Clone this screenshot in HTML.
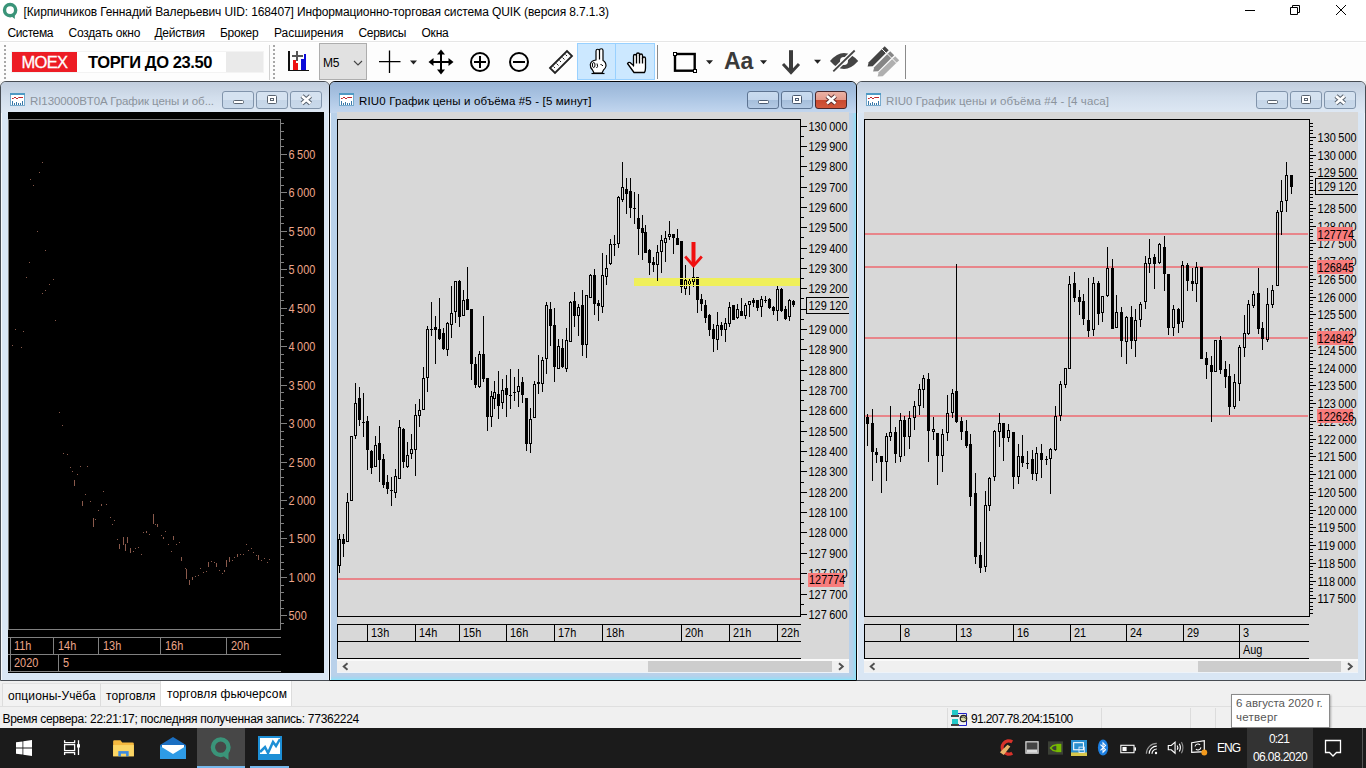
<!DOCTYPE html>
<html lang="ru">
<head>
<meta charset="utf-8">
<title>QUIK</title>
<style>
html,body{margin:0;padding:0}
body{width:1366px;height:768px;overflow:hidden;position:relative;background:#fff;font-family:"Liberation Sans",sans-serif;font-size:12px;color:#000}
.abs{position:absolute}
.t{position:absolute;white-space:nowrap;line-height:1}
#titlebar{left:0;top:0;width:1366px;height:22px;background:#fff}
#menubar{left:0;top:22px;width:1366px;height:20px;background:#fff}
#menubar .t{top:5px;font-size:12.5px}
#toolbar{left:0;top:43px;width:1366px;height:38px;background:#fdfdfd}
#tbline{left:0;top:41px;width:1366px;height:1px;background:#e6e6e6}
#mdi{left:0;top:81px;width:1366px;height:600px;background:#f0f0f0}
.win{position:absolute;top:0;height:600px;border:1px solid #474c53;border-radius:6px 6px 0 0;box-sizing:border-box;background:#d9e6f4;overflow:hidden;box-shadow:inset 1px 1px 0 rgba(255,255,255,.75),inset -1px 0 0 rgba(255,255,255,.5)}
.win.active{border-color:#05070a;z-index:1;background:#b9d1ea;box-shadow:inset 1px 1px 0 rgba(255,255,255,.8),inset -1px -1px 0 #8fe2f8,inset -3px -3px 2px rgba(143,222,248,.55)}
.win .tb{position:absolute;left:0;top:0;right:0;height:31px;background:linear-gradient(#c1cddd 0,#d2deec 50%,#dee8f4 100%)}
.win.active .tb{background:linear-gradient(#98b4d6 0,#a9c3e2 45%,#c3d7ef 100%)}
.win .ttl{position:absolute;top:12px;font-size:12px;line-height:14px;color:#8b939c;white-space:nowrap}
.win.active .ttl{color:#000}
.wb{position:absolute;top:9px;width:32px;height:18px;box-sizing:border-box;border:1px solid #8194ab;border-radius:3px;background:linear-gradient(#d5e2f0 0,#d5e2f0 48%,#c6d6e8 52%,#c9d9ea 100%)}
.active .wb{border-color:#5d7492;background:linear-gradient(#c9dbef 0,#c3d6ec 48%,#a5bedb 52%,#b4cae4 100%)}
.active .wb.close{border-color:#47262b;background:linear-gradient(#eab2a5 0,#e59a8a 48%,#c9492f 52%,#d2583c 100%)}
.wb svg{position:absolute;left:0;top:0}
.chartbg{position:absolute;background:#d8d8d8}
svg.chart{z-index:2}
.sb{z-index:2;position:absolute;height:14px;background:linear-gradient(#fafafa 0,#fafafa 2px,#f0f0f0 2px,#f0f0f0 13px,#eef3f9 13px)}
.sb i{position:absolute;top:2px;height:11px;background:#cdcdcd}
.ax1 text{font-family:"Liberation Sans",sans-serif;font-size:13px;word-spacing:-0.6px}
.ax2 text{font-family:"Liberation Sans",sans-serif;font-size:13px;word-spacing:-0.6px}
#tabs{left:0;top:681px;width:1366px;height:25px;background:#f0f0f0}
#tabs .tab{position:absolute;top:2px;height:23px;box-sizing:border-box;border-left:1px solid #dcdcdc;border-top:1px solid #e2e2e2;background:#f2f2f2;font-size:13px;line-height:24px;white-space:nowrap}
#status{left:0;top:706px;width:1366px;height:22px;background:#f0f0f0;border-top:1px solid #dfdfdf;box-sizing:border-box}
#taskbar{left:0;top:728px;width:1366px;height:40px;background:#1b1b1b}
#taskbar .t{color:#fff}
#apptitle{font-size:12px !important;letter-spacing:-0.120px !important}
#m0{font-size:12px !important;letter-spacing:-0.404px !important}
#m1{font-size:12px !important;letter-spacing:-0.206px !important}
#m2{font-size:12px !important;letter-spacing:-0.285px !important}
#m3{font-size:12px !important;letter-spacing:-0.261px !important}
#m4{font-size:12px !important;letter-spacing:-0.030px !important}
#m5{font-size:12px !important;letter-spacing:-0.317px !important}
#m6{font-size:12px !important;letter-spacing:-0.223px !important}
#moex{font-size:16.5px !important;letter-spacing:-0.723px !important}
#torgi{font-size:16.5px !important;letter-spacing:-0.413px !important}
#ttl1{font-size:11.5px !important;letter-spacing:-0.080px !important}
#ttl2{font-size:11.5px !important;letter-spacing:0.151px !important}
#ttl3{font-size:11.5px !important;letter-spacing:0.093px !important}
#stxt{font-size:12px !important;letter-spacing:-0.281px !important}
#ip{font-size:12px !important;letter-spacing:-0.629px !important}
#tb0{font-size:12px !important;letter-spacing:0.100px !important}
#tb1{font-size:12px !important;letter-spacing:0.074px !important}
#tb2{font-size:12px !important;letter-spacing:0.114px !important}
#tt0{font-size:11.5px !important;letter-spacing:-0.027px !important}
#tt1{font-size:11.5px !important;letter-spacing:0.250px !important}
#eng{font-size:12px !important;letter-spacing:-1.005px !important}
#clk{font-size:12px !important;letter-spacing:-0.840px !important}
#dat{font-size:12px !important;letter-spacing:-0.596px !important}
</style>
</head>
<body>
<!-- ===== application title bar ===== -->
<div id="titlebar" class="abs">
  <svg class="abs" style="left:0;top:0" width="22" height="22" viewBox="0 0 22 22"><circle cx="10.1" cy="10.1" r="5.6" fill="none" stroke="#3a9479" stroke-width="3.4"/><path d="M10.5 15.5L14.8 19L14.8 12Z" fill="#3a9479"/></svg>
  <div class="t" id="apptitle" style="left:23.5px;top:5.5px;font-size:12.5px">[Кирпичников Геннадий Валерьевич UID: 168407] Информационно-торговая система QUIK (версия 8.7.1.3)</div>
  <svg class="abs" style="left:1240px;top:0" width="126" height="22" viewBox="0 0 126 22" fill="none" stroke="#000" stroke-width="1"><path d="M5 10.5H15"/><path d="M50.5 7.5h7v7h-7z"/><path d="M52.5 7.5v-2h7v7h-2"/><path d="M96 5L106 15M106 5L96 15"/></svg>
</div>
<!-- ===== menu ===== -->
<div id="menubar" class="abs">
  <div class="t" id="m0" style="left:7.5px">Система</div>
  <div class="t" id="m1" style="left:68.5px">Создать окно</div>
  <div class="t" id="m2" style="left:154.5px">Действия</div>
  <div class="t" id="m3" style="left:220px">Брокер</div>
  <div class="t" id="m4" style="left:274px">Расширения</div>
  <div class="t" id="m5" style="left:358.5px">Сервисы</div>
  <div class="t" id="m6" style="left:421.5px">Окна</div>
</div>
<div id="tbline" class="abs"></div>
<!-- ===== toolbar ===== -->
<div id="toolbar" class="abs">
  <div class="abs" style="left:4px;top:2px;width:2px;height:34px;background:repeating-linear-gradient(#a8a8a8 0 2px,transparent 2px 4px)"></div>
  <div class="abs" style="left:11px;top:8px;width:253px;height:22px;background:#f3f3f3"></div>
  <div class="abs" style="left:12px;top:9px;width:65px;height:20px;background:#ed1c24"></div>
  <div class="t" id="moex" style="left:21.5px;top:11px;font-size:16.5px;color:#fff;-webkit-text-stroke:0.3px #fff">MOEX</div>
  <div class="abs" style="left:77px;top:9px;width:149px;height:20px;background:#fff"></div>
  <div class="abs" style="left:226px;top:9px;width:37px;height:20px;background:#eaeaea"></div>
  <div class="t" id="torgi" style="left:88px;top:10.5px;font-size:16.5px;font-weight:bold;letter-spacing:-0.3px">ТОРГИ ДО 23.50</div>
  <div class="abs" style="left:269px;top:2px;width:1px;height:35px;background:#d0d0d0"></div>
  <div class="abs" style="left:273px;top:2px;width:2px;height:34px;background:repeating-linear-gradient(#a8a8a8 0 2px,transparent 2px 4px)"></div>
  <!-- toolbar icons: one svg in page coordinates -->
  <div class="abs" style="left:319px;top:0;width:48px;height:37px;background:#e1e1e1;border:1px solid #adadad;box-sizing:border-box"></div>
  <div class="t" id="m5" style="left:323px;top:14px;font-size:11.5px">M5</div>
  <div class="abs" style="left:577px;top:0;width:78px;height:37px;background:#cce8ff;border:1px solid #99d1ff;box-sizing:border-box"></div>
  <div class="abs" style="left:615px;top:0;width:1px;height:37px;background:#99d1ff"></div>
  <div class="abs" style="left:657px;top:2px;width:1px;height:34px;background:#8a8a8a"></div>
  <div class="abs" style="left:905px;top:2px;width:1px;height:34px;background:#8a8a8a"></div>
  <div class="t" id="aa" style="left:724px;top:6.500px;font-size:23px;font-weight:bold;color:#3a3a3a">Aa</div>
  <svg class="abs" style="left:0;top:0" width="1366" height="38" viewBox="0 43 1366 38">
    <!-- add chart -->
    <g shape-rendering="crispEdges"><rect x="288" y="51" width="1.500" height="20" fill="#111"/><rect x="288" y="69.500" width="21" height="1.500" fill="#111"/><rect x="293" y="60" width="2.500" height="9.500" fill="#ee1111"/><rect x="295.500" y="63" width="2.500" height="6.500" fill="#ee1111"/><rect x="301" y="59" width="2.500" height="10.500" fill="#0a0ad8"/><rect x="303.500" y="54" width="2.500" height="15.500" fill="#0a0ad8"/><rect x="296" y="50.500" width="2" height="10.500" fill="#555"/><rect x="291.500" y="55" width="11" height="2" fill="#555"/></g>
    <!-- chevron -->
    <path d="M354 61L358 65L362 61" fill="none" stroke="#444" stroke-width="1.100"/>
    <!-- crosshair -->
    <path d="M389.500 50.500V73M379 61.700H400.500" stroke="#000" stroke-width="1.300" fill="none"/>
    <path d="M410 60.500H417L413.500 64.500Z" fill="#222"/>
    <!-- move -->
    <g stroke="#000" stroke-width="2" fill="none"><path d="M441 52V72M431 62H451"/></g>
    <path d="M441 49.500L445 54.500H437ZM441 74.500L445 69.500H437ZM428.500 62L433.500 58V66ZM453.500 62L448.500 58V66Z" fill="#000"/>
    <!-- zoom in / out -->
    <g stroke="#000" stroke-width="2" fill="none"><circle cx="480" cy="62" r="9"/><path d="M480 56V68M474 62H486"/><circle cx="519" cy="62" r="9"/><path d="M513 62H525"/></g>
    <!-- ruler -->
    <g stroke="#222" fill="none"><path d="M550 68L567 51L572 56L555 73Z" stroke-width="1.800"/><path d="M553.500 66.500L555 68M556.500 63.500L558.500 65.500M559.500 60.500L561 62M562.500 57.500L564.500 59.500M565.500 54.500L567 56" stroke-width="1"/></g>
    <!-- hand: two fingers -->
    <g stroke="#000" stroke-width="1.200" fill="#fff" stroke-linejoin="round"><path d="M596 60V51a1.750 1.750 0 0 1 3.500 0V50.500a1.750 1.750 0 0 1 3.500 0V60.500Q606 62 606 66Q605.500 68.500 603.500 70L602 73H594L592.500 70Q590 67.500 590.300 64.500Q591 60.500 596 60Z"/><path d="M599.500 51V59.500" fill="none"/><ellipse cx="593.700" cy="65" rx="1.300" ry="2.600" fill="none" stroke-width="1"/><path d="M597 63.500Q598.500 67 596.500 68M600.500 64.500Q602 64.500 603 66" fill="none" stroke-width="1"/><path d="M591.500 73.500H604.500" fill="none"/></g>
    <!-- hand: open -->
    <g stroke="#000" stroke-width="1.300" fill="#fff" stroke-linejoin="round"><path d="M633.500 66V56a1.500 1.500 0 0 1 3 0V54.500a1.500 1.500 0 0 1 3 0V55.500a1.500 1.500 0 0 1 3 0V58.500a1.500 1.500 0 0 1 3 0V68Q645.500 71 644.500 72.500H634L627.500 63.500Q628.500 62 630 62.500L633.500 65.500Z"/><path d="M636.500 56V63.500M639.500 55V63.500M642.500 58V63.500" fill="none"/></g>
    <!-- rectangle tool -->
    <rect x="675" y="54" width="19.700" height="16.700" fill="none" stroke="#000" stroke-width="2.400"/><rect x="673.500" y="52.500" width="3" height="3" fill="#fff" stroke="#000" stroke-width="1"/><rect x="693.500" y="69.500" width="3" height="3" fill="#fff" stroke="#000" stroke-width="1"/>
    <path d="M706 60.200H713L709.500 64.200Z" fill="#222"/>
    <path d="M760 60.200H767L763.500 64.200Z" fill="#222"/>
    <!-- down arrow -->
    <g stroke="#3c3c3c" fill="none"><path d="M791 50.200V71" stroke-width="4"/><path d="M783 64L791 72.500L799 64" stroke-width="3"/></g>
    <path d="M814 59.800H821L817.500 63.800Z" fill="#222"/>
    <!-- crossed eye -->
    <path d="M830 61Q837 53 844 53T858.200 61Q851 69 844 69T830 61Z" fill="#444"/><circle cx="844" cy="61" r="4" fill="#fdfdfd"/><path d="M832.500 72.200L855.500 49.700" stroke="#fdfdfd" stroke-width="4.500"/><path d="M833.300 71.400L854.700 50.500" stroke="#444" stroke-width="1.800"/>
    <!-- pencils -->
    <g><path d="M867.600 66.400L868.700 62.200L884.700 46.200L888.700 50.200L872.700 66.200Z" fill="#444"/><path d="M873.100 71.400L874.200 67.200L890.200 51.200L894.200 55.200L878.200 71.200Z" fill="#868686"/><path d="M877.600 76.400L878.700 72.200L895.200 56.200L899.200 60.200L882.700 76.200Z" fill="#b0b0b0"/><path d="M882 49L886 53M887.500 54L891.500 58M892.500 59L896.500 63" stroke="#fdfdfd" stroke-width="1"/></g>
  </svg>
</div>
<!-- ===== MDI area ===== -->
<div id="mdi" class="abs">
  <!-- window 1 -->
  <div class="win" style="left:0;width:330px">
    <div class="tb"></div>
    <svg class="abs" style="left:9px;top:11px" width="15" height="13" viewBox="0 0 15 13" shape-rendering="crispEdges"><rect x="0" y="0" width="15" height="13" fill="#fff"/><rect x="0" y="0" width="15" height="2" fill="#4f9ac4"/><rect x="0" y="2" width="1" height="11" fill="#76aacd"/><rect x="14" y="2" width="1" height="11" fill="#76aacd"/><rect x="0" y="12" width="15" height="1" fill="#76aacd"/><path d="M2 5.500h1.500l1.500-1.500l2 2l1.500-1.500h4.500" fill="none" stroke="#c0282d" stroke-width="1" shape-rendering="auto"/><path d="M2.500 8v4M4.500 10v2M6.500 9v3M8.500 10v2M10.500 10v2M12.500 8v4" stroke="#3a78a8" stroke-width="1"/></svg>
    <div class="ttl" id="ttl1" style="left:29px">RI130000BT0A График цены и об...</div>
    <div class="wb" style="left:221px"><svg width="30" height="16" viewBox="0 0 30 16"><rect x="10.500" y="8.500" width="10" height="3" rx="1" fill="#fff" stroke="#59636f"/></svg></div>
    <div class="wb" style="left:255px"><svg width="30" height="16" viewBox="0 0 30 16"><rect x="10.500" y="3.500" width="9" height="8" rx="1" fill="#fff" stroke="#59636f"/><rect x="13.500" y="6.500" width="3" height="2" fill="#fff" stroke="#59636f"/></svg></div>
    <div class="wb close" style="left:289px"><svg width="30" height="16" viewBox="0 0 30 16"><path d="M11 4L19.500 11.500M19.500 4L11 11.500" stroke="#59636f" stroke-width="4.600"/><path d="M11 4L19.500 11.500M19.500 4L11 11.500" stroke="#fff" stroke-width="2.600"/></svg></div>
    <div class="abs" style="left:7px;top:30px;width:316px;height:561px;background:#000"></div>
  </div>
  <!-- window 2 (active) -->
  <div class="win active" style="left:329px;width:528px">
    <div class="tb"></div>
    <svg class="abs" style="left:9px;top:11px" width="15" height="13" viewBox="0 0 15 13" shape-rendering="crispEdges"><rect x="0" y="0" width="15" height="13" fill="#fff"/><rect x="0" y="0" width="15" height="2" fill="#4f9ac4"/><rect x="0" y="2" width="1" height="11" fill="#76aacd"/><rect x="14" y="2" width="1" height="11" fill="#76aacd"/><rect x="0" y="12" width="15" height="1" fill="#76aacd"/><path d="M2 5.500h1.500l1.500-1.500l2 2l1.500-1.500h4.500" fill="none" stroke="#c0282d" stroke-width="1" shape-rendering="auto"/><path d="M2.500 8v4M4.500 10v2M6.500 9v3M8.500 10v2M10.500 10v2M12.500 8v4" stroke="#3a78a8" stroke-width="1"/></svg>
    <div class="ttl" id="ttl2" style="left:29px">RIU0 График цены и объёма #5 - [5 минут]</div>
    <div class="wb" style="left:417px"><svg width="30" height="16" viewBox="0 0 30 16"><rect x="10.500" y="8.500" width="10" height="3" rx="1" fill="#fff" stroke="#4a5a70"/></svg></div>
    <div class="wb" style="left:451px"><svg width="30" height="16" viewBox="0 0 30 16"><rect x="10.500" y="3.500" width="9" height="8" rx="1" fill="#fff" stroke="#4a5a70"/><rect x="13.500" y="6.500" width="3" height="2" fill="#fff" stroke="#4a5a70"/></svg></div>
    <div class="wb close" style="left:485px"><svg width="30" height="16" viewBox="0 0 30 16"><path d="M11 4L19.500 11.500M19.500 4L11 11.500" stroke="#5a3030" stroke-width="4.400"/><path d="M11 4L19.500 11.500M19.500 4L11 11.500" stroke="#fff" stroke-width="2.600"/></svg></div>
    <div class="chartbg" style="left:7px;top:30px;width:512px;height:561px"></div>
  </div>
  <!-- window 3 -->
  <div class="win" style="left:856px;width:510px">
    <div class="tb"></div>
    <svg class="abs" style="left:9px;top:11px" width="15" height="13" viewBox="0 0 15 13" shape-rendering="crispEdges"><rect x="0" y="0" width="15" height="13" fill="#fff"/><rect x="0" y="0" width="15" height="2" fill="#4f9ac4"/><rect x="0" y="2" width="1" height="11" fill="#76aacd"/><rect x="14" y="2" width="1" height="11" fill="#76aacd"/><rect x="0" y="12" width="15" height="1" fill="#76aacd"/><path d="M2 5.500h1.500l1.500-1.500l2 2l1.500-1.500h4.500" fill="none" stroke="#c0282d" stroke-width="1" shape-rendering="auto"/><path d="M2.500 8v4M4.500 10v2M6.500 9v3M8.500 10v2M10.500 10v2M12.500 8v4" stroke="#3a78a8" stroke-width="1"/></svg>
    <div class="ttl" id="ttl3" style="left:29px">RIU0 График цены и объёма #4 - [4 часа]</div>
    <div class="wb" style="left:399px"><svg width="30" height="16" viewBox="0 0 30 16"><rect x="10.500" y="8.500" width="10" height="3" rx="1" fill="#fff" stroke="#59636f"/></svg></div>
    <div class="wb" style="left:433px"><svg width="30" height="16" viewBox="0 0 30 16"><rect x="10.500" y="3.500" width="9" height="8" rx="1" fill="#fff" stroke="#59636f"/><rect x="13.500" y="6.500" width="3" height="2" fill="#fff" stroke="#59636f"/></svg></div>
    <div class="wb close" style="left:467px"><svg width="30" height="16" viewBox="0 0 30 16"><path d="M11 4L19.500 11.500M19.500 4L11 11.500" stroke="#59636f" stroke-width="4.600"/><path d="M11 4L19.500 11.500M19.500 4L11 11.500" stroke="#fff" stroke-width="2.600"/></svg></div>
    <div class="chartbg" style="left:7px;top:30px;width:494px;height:561px"></div>
  </div>
</div>
<!-- charts (absolute page coordinates) -->
<svg class="abs chart" style="left:8px;top:112px" width="316" height="561" viewBox="0 0 316 561" shape-rendering="crispEdges">
<g fill="#808080">
<rect x="0" y="7" width="273" height="1"/><rect x="0" y="7" width="1" height="511"/><rect x="0" y="517" width="273" height="1"/><rect x="272" y="7" width="1" height="511"/>
<rect x="273" y="11" width="3" height="1"/>
<rect x="273" y="19" width="3" height="1"/>
<rect x="273" y="27" width="3" height="1"/>
<rect x="273" y="34" width="3" height="1"/>
<rect x="273" y="42" width="6" height="1"/>
<rect x="273" y="50" width="3" height="1"/>
<rect x="273" y="57" width="3" height="1"/>
<rect x="273" y="65" width="3" height="1"/>
<rect x="273" y="73" width="3" height="1"/>
<rect x="273" y="80" width="6" height="1"/>
<rect x="273" y="88" width="3" height="1"/>
<rect x="273" y="96" width="3" height="1"/>
<rect x="273" y="104" width="3" height="1"/>
<rect x="273" y="111" width="3" height="1"/>
<rect x="273" y="119" width="6" height="1"/>
<rect x="273" y="127" width="3" height="1"/>
<rect x="273" y="134" width="3" height="1"/>
<rect x="273" y="142" width="3" height="1"/>
<rect x="273" y="150" width="3" height="1"/>
<rect x="273" y="157" width="6" height="1"/>
<rect x="273" y="165" width="3" height="1"/>
<rect x="273" y="173" width="3" height="1"/>
<rect x="273" y="180" width="3" height="1"/>
<rect x="273" y="188" width="3" height="1"/>
<rect x="273" y="196" width="6" height="1"/>
<rect x="273" y="203" width="3" height="1"/>
<rect x="273" y="211" width="3" height="1"/>
<rect x="273" y="219" width="3" height="1"/>
<rect x="273" y="227" width="3" height="1"/>
<rect x="273" y="234" width="6" height="1"/>
<rect x="273" y="242" width="3" height="1"/>
<rect x="273" y="250" width="3" height="1"/>
<rect x="273" y="257" width="3" height="1"/>
<rect x="273" y="265" width="3" height="1"/>
<rect x="273" y="273" width="6" height="1"/>
<rect x="273" y="280" width="3" height="1"/>
<rect x="273" y="288" width="3" height="1"/>
<rect x="273" y="296" width="3" height="1"/>
<rect x="273" y="303" width="3" height="1"/>
<rect x="273" y="311" width="6" height="1"/>
<rect x="273" y="319" width="3" height="1"/>
<rect x="273" y="327" width="3" height="1"/>
<rect x="273" y="334" width="3" height="1"/>
<rect x="273" y="342" width="3" height="1"/>
<rect x="273" y="350" width="6" height="1"/>
<rect x="273" y="357" width="3" height="1"/>
<rect x="273" y="365" width="3" height="1"/>
<rect x="273" y="373" width="3" height="1"/>
<rect x="273" y="380" width="3" height="1"/>
<rect x="273" y="388" width="6" height="1"/>
<rect x="273" y="396" width="3" height="1"/>
<rect x="273" y="403" width="3" height="1"/>
<rect x="273" y="411" width="3" height="1"/>
<rect x="273" y="419" width="3" height="1"/>
<rect x="273" y="426" width="6" height="1"/>
<rect x="273" y="434" width="3" height="1"/>
<rect x="273" y="442" width="3" height="1"/>
<rect x="273" y="450" width="3" height="1"/>
<rect x="273" y="457" width="3" height="1"/>
<rect x="273" y="465" width="6" height="1"/>
<rect x="273" y="473" width="3" height="1"/>
<rect x="273" y="480" width="3" height="1"/>
<rect x="273" y="488" width="3" height="1"/>
<rect x="273" y="496" width="3" height="1"/>
<rect x="273" y="503" width="6" height="1"/>
<rect x="273" y="511" width="3" height="1"/>
<rect x="0" y="525" width="273" height="1"/><rect x="0" y="542" width="273" height="1"/><rect x="0" y="559" width="273" height="1"/>
<rect x="2" y="525" width="1" height="17"/>
<rect x="45" y="525" width="1" height="17"/>
<rect x="90" y="525" width="1" height="17"/>
<rect x="152" y="525" width="1" height="17"/>
<rect x="218" y="525" width="1" height="17"/>
<rect x="2" y="542" width="1" height="17"/>
<rect x="50" y="542" width="1" height="17"/>
</g>
<g fill="#8a5a4c"><rect x="51" y="300" width="1" height="1"/>
<rect x="54" y="313" width="1" height="1"/>
<rect x="55" y="341" width="1" height="1"/>
<rect x="59" y="342" width="1" height="1"/>
<rect x="62" y="355" width="1" height="1"/>
<rect x="64" y="359" width="1" height="1"/>
<rect x="66" y="368" width="1" height="6"/>
<rect x="69" y="362" width="1" height="1"/>
<rect x="72" y="354" width="1" height="1"/>
<rect x="79" y="354" width="1" height="1"/>
<rect x="74" y="389" width="1" height="5"/>
<rect x="77" y="382" width="1" height="1"/>
<rect x="82" y="389" width="1" height="1"/>
<rect x="85" y="406" width="1" height="9"/>
<rect x="87" y="407" width="1" height="1"/>
<rect x="90" y="398" width="1" height="1"/>
<rect x="93" y="392" width="1" height="2"/>
<rect x="95" y="379" width="1" height="1"/>
<rect x="98" y="392" width="1" height="1"/>
<rect x="102" y="405" width="1" height="1"/>
<rect x="104" y="412" width="1" height="1"/>
<rect x="106" y="408" width="1" height="1"/>
<rect x="109" y="427" width="1" height="1"/>
<rect x="111" y="432" width="1" height="5"/>
<rect x="115" y="425" width="1" height="8"/>
<rect x="117" y="432" width="1" height="7"/>
<rect x="119" y="425" width="1" height="6"/>
<rect x="122" y="436" width="1" height="5"/>
<rect x="125" y="439" width="1" height="1"/>
<rect x="127" y="436" width="1" height="1"/>
<rect x="130" y="435" width="1" height="1"/>
<rect x="133" y="442" width="1" height="1"/>
<rect x="135" y="420" width="1" height="1"/>
<rect x="138" y="419" width="1" height="2"/>
<rect x="141" y="422" width="1" height="1"/>
<rect x="145" y="402" width="1" height="10"/>
<rect x="147" y="412" width="1" height="1"/>
<rect x="149" y="412" width="1" height="3"/>
<rect x="153" y="423" width="1" height="1"/>
<rect x="155" y="425" width="1" height="2"/>
<rect x="157" y="419" width="1" height="1"/>
<rect x="160" y="432" width="1" height="1"/>
<rect x="163" y="439" width="1" height="1"/>
<rect x="165" y="424" width="1" height="4"/>
<rect x="168" y="432" width="1" height="1"/>
<rect x="171" y="430" width="1" height="1"/>
<rect x="173" y="445" width="1" height="4"/>
<rect x="177" y="456" width="1" height="1"/>
<rect x="178" y="457" width="1" height="10"/>
<rect x="181" y="468" width="1" height="5"/>
<rect x="184" y="465" width="1" height="3"/>
<rect x="187" y="464" width="1" height="1"/>
<rect x="190" y="463" width="1" height="1"/>
<rect x="192" y="456" width="1" height="1"/>
<rect x="195" y="460" width="1" height="1"/>
<rect x="198" y="459" width="1" height="1"/>
<rect x="200" y="450" width="1" height="5"/>
<rect x="203" y="449" width="1" height="1"/>
<rect x="206" y="450" width="1" height="1"/>
<rect x="208" y="451" width="1" height="4"/>
<rect x="211" y="458" width="1" height="1"/>
<rect x="214" y="461" width="1" height="1"/>
<rect x="216" y="458" width="1" height="2"/>
<rect x="218" y="448" width="1" height="7"/>
<rect x="221" y="445" width="1" height="5"/>
<rect x="224" y="448" width="1" height="1"/>
<rect x="226" y="445" width="1" height="1"/>
<rect x="229" y="442" width="1" height="3"/>
<rect x="232" y="442" width="1" height="1"/>
<rect x="235" y="442" width="1" height="1"/>
<rect x="238" y="432" width="1" height="1"/>
<rect x="240" y="438" width="1" height="1"/>
<rect x="243" y="436" width="1" height="1"/>
<rect x="245" y="440" width="1" height="1"/>
<rect x="248" y="443" width="1" height="1"/>
<rect x="250" y="443" width="1" height="5"/>
<rect x="253" y="448" width="1" height="1"/>
<rect x="256" y="446" width="1" height="1"/>
<rect x="259" y="450" width="1" height="1"/>
<rect x="261" y="447" width="1" height="1"/>
<rect x="34" y="50" width="1" height="1"/>
<rect x="31" y="60" width="1" height="1"/>
<rect x="22" y="67" width="1" height="1"/>
<rect x="25" y="73" width="1" height="1"/>
<rect x="29" y="119" width="1" height="1"/>
<rect x="37" y="138" width="1" height="1"/>
<rect x="21" y="150" width="1" height="1"/>
<rect x="18" y="165" width="1" height="1"/>
<rect x="45" y="167" width="1" height="1"/>
<rect x="41" y="172" width="1" height="1"/>
<rect x="37" y="178" width="1" height="1"/>
<rect x="34" y="181" width="1" height="1"/>
<rect x="47" y="208" width="1" height="1"/>
<rect x="7" y="217" width="1" height="1"/>
<rect x="15" y="219" width="1" height="1"/>
<rect x="4" y="233" width="1" height="1"/>
<rect x="13" y="235" width="1" height="1"/></g>
<g class="ax1" fill="#eea68a">
<text transform="translate(280.5 47.2) scale(0.84 1)">6 500</text>
<text transform="translate(280.5 85.2) scale(0.84 1)">6 000</text>
<text transform="translate(280.5 124.2) scale(0.84 1)">5 500</text>
<text transform="translate(280.5 162.1) scale(0.84 1)">5 000</text>
<text transform="translate(280.5 201.1) scale(0.84 1)">4 500</text>
<text transform="translate(280.5 239.1) scale(0.84 1)">4 000</text>
<text transform="translate(280.5 278.1) scale(0.84 1)">3 500</text>
<text transform="translate(280.5 316.1) scale(0.84 1)">3 000</text>
<text transform="translate(280.5 355.1) scale(0.84 1)">2 500</text>
<text transform="translate(280.5 393.1) scale(0.84 1)">2 000</text>
<text transform="translate(280.5 431.1) scale(0.84 1)">1 500</text>
<text transform="translate(280.5 470.1) scale(0.84 1)">1 000</text>
<text transform="translate(280.5 508.1) scale(0.84 1)">500</text>
<text transform="translate(6 537.8) scale(0.84 1)">11h</text>
<text transform="translate(50 537.8) scale(0.84 1)">14h</text>
<text transform="translate(95 537.8) scale(0.84 1)">13h</text>
<text transform="translate(157 537.8) scale(0.84 1)">16h</text>
<text transform="translate(223 537.8) scale(0.84 1)">20h</text>
<text transform="translate(6 554.8) scale(0.84 1)">2020</text>
<text transform="translate(55 554.8) scale(0.84 1)">5</text>
</g></svg>
<svg class="abs chart" style="left:337px;top:112px" width="512" height="561" viewBox="0 0 512 561" shape-rendering="crispEdges">
<g fill="#000">
<rect x="0" y="7" width="464" height="1"/><rect x="0" y="7" width="1" height="498"/><rect x="0" y="504" width="464" height="1"/><rect x="463" y="7" width="1" height="498"/>
<rect x="297" y="166" width="166" height="8" fill="#efef5a"/>
<rect x="1" y="466" width="462" height="2" fill="#e8858a"/>
<rect x="2" y="422" width="1" height="5"/>
<rect x="2" y="454" width="1" height="7"/>
<path d="M1 427h3v27h-3zM2 428v25h1v-25z" fill-rule="evenodd"/>
<rect x="6" y="422" width="1" height="23"/>
<rect x="5" y="427" width="3" height="5"/>
<rect x="10" y="381" width="1" height="9"/>
<path d="M9 390h3v40h-3zM10 391v38h1v-38z" fill-rule="evenodd"/>
<path d="M13 324h3v65h-3zM14 325v63h1v-63z" fill-rule="evenodd"/>
<rect x="18" y="271" width="1" height="20"/>
<rect x="18" y="324" width="1" height="3"/>
<path d="M17 291h3v33h-3zM18 292v31h1v-31z" fill-rule="evenodd"/>
<rect x="22" y="275" width="1" height="39"/>
<rect x="21" y="286" width="3" height="22"/>
<rect x="26" y="281" width="1" height="44"/>
<rect x="25" y="310" width="3" height="1"/>
<rect x="30" y="304" width="1" height="54"/>
<rect x="29" y="309" width="3" height="29"/>
<rect x="34" y="338" width="1" height="24"/>
<rect x="33" y="339" width="3" height="17"/>
<rect x="38" y="324" width="1" height="9"/>
<path d="M37 333h3v22h-3zM38 334v20h1v-20z" fill-rule="evenodd"/>
<rect x="42" y="314" width="1" height="56"/>
<rect x="41" y="331" width="3" height="17"/>
<rect x="46" y="342" width="1" height="34"/>
<rect x="45" y="347" width="3" height="26"/>
<rect x="50" y="363" width="1" height="19"/>
<rect x="49" y="370" width="3" height="7"/>
<rect x="54" y="365" width="1" height="29"/>
<rect x="53" y="378" width="3" height="1"/>
<rect x="58" y="357" width="1" height="7"/>
<rect x="58" y="381" width="1" height="5"/>
<path d="M57 364h3v17h-3zM58 365v15h1v-15z" fill-rule="evenodd"/>
<rect x="62" y="308" width="1" height="7"/>
<path d="M61 315h3v52h-3zM62 316v50h1v-50z" fill-rule="evenodd"/>
<rect x="66" y="316" width="1" height="40"/>
<rect x="65" y="317" width="3" height="33"/>
<rect x="70" y="330" width="1" height="13"/>
<rect x="70" y="355" width="1" height="1"/>
<path d="M69 343h3v12h-3zM70 344v10h1v-10z" fill-rule="evenodd"/>
<rect x="74" y="322" width="1" height="15"/>
<rect x="74" y="342" width="1" height="5"/>
<path d="M73 337h3v5h-3zM74 338v3h1v-3z" fill-rule="evenodd"/>
<rect x="78" y="292" width="1" height="11"/>
<rect x="78" y="338" width="1" height="26"/>
<path d="M77 303h3v35h-3zM78 304v33h1v-33z" fill-rule="evenodd"/>
<rect x="82" y="287" width="1" height="11"/>
<rect x="82" y="304" width="1" height="11"/>
<path d="M81 298h3v6h-3zM82 299v4h1v-4z" fill-rule="evenodd"/>
<rect x="86" y="255" width="1" height="11"/>
<path d="M85 266h3v32h-3zM86 267v30h1v-30z" fill-rule="evenodd"/>
<rect x="90" y="214" width="1" height="3"/>
<rect x="90" y="266" width="1" height="14"/>
<path d="M89 217h3v49h-3zM90 218v47h1v-47z" fill-rule="evenodd"/>
<rect x="94" y="190" width="1" height="34"/>
<rect x="93" y="217" width="3" height="1"/>
<rect x="98" y="204" width="1" height="48"/>
<rect x="97" y="215" width="3" height="3"/>
<rect x="102" y="186" width="1" height="42"/>
<rect x="101" y="217" width="3" height="10"/>
<rect x="106" y="216" width="1" height="22"/>
<rect x="105" y="221" width="3" height="16"/>
<rect x="110" y="210" width="1" height="1"/>
<rect x="110" y="238" width="1" height="6"/>
<path d="M109 211h3v27h-3zM110 212v25h1v-25z" fill-rule="evenodd"/>
<rect x="114" y="174" width="1" height="27"/>
<rect x="114" y="213" width="1" height="13"/>
<path d="M113 201h3v12h-3zM114 202v10h1v-10z" fill-rule="evenodd"/>
<rect x="118" y="200" width="1" height="11"/>
<path d="M117 169h3v31h-3zM118 170v29h1v-29z" fill-rule="evenodd"/>
<rect x="122" y="168" width="1" height="47"/>
<rect x="121" y="169" width="3" height="36"/>
<rect x="126" y="178" width="1" height="10"/>
<path d="M125 188h3v16h-3zM126 189v14h1v-14z" fill-rule="evenodd"/>
<rect x="130" y="155" width="1" height="43"/>
<rect x="129" y="187" width="3" height="11"/>
<rect x="134" y="197" width="1" height="71"/>
<rect x="133" y="197" width="3" height="55"/>
<rect x="138" y="245" width="1" height="31"/>
<rect x="137" y="252" width="3" height="21"/>
<rect x="142" y="239" width="1" height="3"/>
<rect x="142" y="275" width="1" height="1"/>
<path d="M141 242h3v33h-3zM142 243v31h1v-31z" fill-rule="evenodd"/>
<rect x="146" y="204" width="1" height="66"/>
<rect x="145" y="242" width="3" height="25"/>
<rect x="150" y="266" width="1" height="53"/>
<rect x="149" y="266" width="3" height="39"/>
<rect x="154" y="279" width="1" height="5"/>
<rect x="154" y="305" width="1" height="10"/>
<path d="M153 284h3v21h-3zM154 285v19h1v-19z" fill-rule="evenodd"/>
<rect x="157" y="269" width="1" height="11"/>
<rect x="157" y="287" width="1" height="10"/>
<path d="M156 280h3v7h-3zM157 281v5h1v-5z" fill-rule="evenodd"/>
<rect x="161" y="259" width="1" height="48"/>
<rect x="160" y="282" width="3" height="12"/>
<rect x="165" y="267" width="1" height="11"/>
<rect x="165" y="291" width="1" height="6"/>
<path d="M164 278h3v13h-3zM165 279v11h1v-11z" fill-rule="evenodd"/>
<rect x="169" y="263" width="1" height="42"/>
<rect x="168" y="276" width="3" height="7"/>
<rect x="173" y="257" width="1" height="40"/>
<rect x="172" y="283" width="3" height="1"/>
<rect x="177" y="265" width="1" height="24"/>
<rect x="176" y="280" width="3" height="1"/>
<rect x="181" y="257" width="1" height="17"/>
<rect x="181" y="280" width="1" height="15"/>
<path d="M180 274h3v6h-3zM181 275v4h1v-4z" fill-rule="evenodd"/>
<rect x="185" y="265" width="1" height="26"/>
<rect x="184" y="270" width="3" height="13"/>
<rect x="189" y="286" width="1" height="53"/>
<rect x="188" y="286" width="3" height="46"/>
<rect x="193" y="296" width="1" height="11"/>
<rect x="193" y="332" width="1" height="9"/>
<path d="M192 307h3v25h-3zM193 308v23h1v-23z" fill-rule="evenodd"/>
<rect x="197" y="269" width="1" height="3"/>
<path d="M196 272h3v34h-3zM197 273v32h1v-32z" fill-rule="evenodd"/>
<rect x="201" y="243" width="1" height="39"/>
<rect x="200" y="270" width="3" height="2"/>
<rect x="205" y="245" width="1" height="3"/>
<rect x="205" y="272" width="1" height="8"/>
<path d="M204 248h3v24h-3zM205 249v22h1v-22z" fill-rule="evenodd"/>
<rect x="209" y="190" width="1" height="3"/>
<rect x="209" y="247" width="1" height="15"/>
<path d="M208 193h3v54h-3zM209 194v52h1v-52z" fill-rule="evenodd"/>
<rect x="213" y="190" width="1" height="44"/>
<rect x="212" y="197" width="3" height="17"/>
<rect x="217" y="196" width="1" height="74"/>
<rect x="216" y="213" width="3" height="42"/>
<rect x="221" y="227" width="1" height="7"/>
<path d="M220 234h3v23h-3zM221 235v21h1v-21z" fill-rule="evenodd"/>
<rect x="225" y="227" width="1" height="29"/>
<rect x="224" y="236" width="3" height="19"/>
<rect x="229" y="216" width="1" height="12"/>
<rect x="229" y="257" width="1" height="3"/>
<path d="M228 228h3v29h-3zM229 229v27h1v-27z" fill-rule="evenodd"/>
<rect x="233" y="189" width="1" height="1"/>
<path d="M232 190h3v40h-3zM233 191v38h1v-38z" fill-rule="evenodd"/>
<rect x="237" y="180" width="1" height="35"/>
<rect x="236" y="189" width="3" height="15"/>
<rect x="241" y="192" width="1" height="3"/>
<rect x="241" y="204" width="1" height="20"/>
<path d="M240 195h3v9h-3zM241 196v7h1v-7z" fill-rule="evenodd"/>
<rect x="245" y="178" width="1" height="66"/>
<rect x="244" y="193" width="3" height="40"/>
<rect x="249" y="233" width="1" height="13"/>
<path d="M248 183h3v50h-3zM249 184v48h1v-48z" fill-rule="evenodd"/>
<rect x="253" y="162" width="1" height="1"/>
<path d="M252 163h3v23h-3zM253 164v21h1v-21z" fill-rule="evenodd"/>
<rect x="257" y="157" width="1" height="46"/>
<rect x="256" y="163" width="3" height="29"/>
<rect x="261" y="188" width="1" height="21"/>
<rect x="260" y="191" width="3" height="3"/>
<rect x="265" y="141" width="1" height="22"/>
<rect x="265" y="195" width="1" height="6"/>
<path d="M264 163h3v32h-3zM265 164v30h1v-30z" fill-rule="evenodd"/>
<rect x="269" y="143" width="1" height="13"/>
<rect x="269" y="165" width="1" height="8"/>
<path d="M268 156h3v9h-3zM269 157v7h1v-7z" fill-rule="evenodd"/>
<rect x="273" y="127" width="1" height="5"/>
<rect x="273" y="152" width="1" height="1"/>
<path d="M272 132h3v20h-3zM273 133v18h1v-18z" fill-rule="evenodd"/>
<rect x="277" y="123" width="1" height="21"/>
<rect x="276" y="132" width="3" height="1"/>
<rect x="281" y="84" width="1" height="1"/>
<rect x="281" y="132" width="1" height="4"/>
<path d="M280 85h3v47h-3zM281 86v45h1v-45z" fill-rule="evenodd"/>
<rect x="285" y="50" width="1" height="25"/>
<rect x="285" y="88" width="1" height="2"/>
<path d="M284 75h3v13h-3zM285 76v11h1v-11z" fill-rule="evenodd"/>
<rect x="289" y="66" width="1" height="36"/>
<rect x="288" y="77" width="3" height="5"/>
<rect x="293" y="66" width="1" height="40"/>
<rect x="292" y="79" width="3" height="17"/>
<rect x="297" y="80" width="1" height="32"/>
<rect x="296" y="96" width="3" height="1"/>
<rect x="301" y="82" width="1" height="61"/>
<rect x="300" y="106" width="3" height="11"/>
<rect x="305" y="103" width="1" height="45"/>
<rect x="304" y="116" width="3" height="5"/>
<rect x="308" y="113" width="1" height="28"/>
<rect x="307" y="120" width="3" height="21"/>
<rect x="312" y="137" width="1" height="26"/>
<rect x="311" y="138" width="3" height="13"/>
<rect x="316" y="145" width="1" height="15"/>
<rect x="315" y="150" width="3" height="3"/>
<rect x="320" y="133" width="1" height="7"/>
<rect x="320" y="153" width="1" height="16"/>
<path d="M319 140h3v13h-3zM320 141v11h1v-11z" fill-rule="evenodd"/>
<rect x="324" y="123" width="1" height="5"/>
<rect x="324" y="140" width="1" height="21"/>
<path d="M323 128h3v12h-3zM324 129v10h1v-10z" fill-rule="evenodd"/>
<rect x="328" y="119" width="1" height="7"/>
<rect x="328" y="131" width="1" height="19"/>
<path d="M327 126h3v5h-3zM328 127v3h1v-3z" fill-rule="evenodd"/>
<rect x="332" y="109" width="1" height="13"/>
<rect x="332" y="125" width="1" height="3"/>
<path d="M331 122h3v3h-3zM332 123v1h1v-1z" fill-rule="evenodd"/>
<rect x="336" y="122" width="1" height="20"/>
<rect x="335" y="122" width="3" height="4"/>
<rect x="340" y="117" width="1" height="16"/>
<rect x="339" y="126" width="3" height="7"/>
<rect x="364" y="182" width="1" height="17"/>
<rect x="363" y="187" width="3" height="5"/>
<rect x="368" y="188" width="1" height="23"/>
<rect x="367" y="193" width="3" height="13"/>
<rect x="372" y="202" width="1" height="22"/>
<rect x="371" y="203" width="3" height="15"/>
<rect x="376" y="212" width="1" height="28"/>
<rect x="375" y="217" width="3" height="10"/>
<rect x="380" y="200" width="1" height="13"/>
<rect x="380" y="228" width="1" height="10"/>
<path d="M379 213h3v15h-3zM380 214v13h1v-13z" fill-rule="evenodd"/>
<rect x="384" y="210" width="1" height="14"/>
<rect x="383" y="213" width="3" height="5"/>
<rect x="388" y="206" width="1" height="5"/>
<rect x="388" y="218" width="1" height="12"/>
<path d="M387 211h3v7h-3zM388 212v5h1v-5z" fill-rule="evenodd"/>
<rect x="392" y="190" width="1" height="5"/>
<rect x="392" y="212" width="1" height="3"/>
<path d="M391 195h3v17h-3zM392 196v15h1v-15z" fill-rule="evenodd"/>
<rect x="396" y="193" width="1" height="15"/>
<rect x="395" y="193" width="3" height="15"/>
<rect x="400" y="192" width="1" height="5"/>
<rect x="400" y="206" width="1" height="1"/>
<path d="M399 197h3v9h-3zM400 198v7h1v-7z" fill-rule="evenodd"/>
<rect x="404" y="186" width="1" height="18"/>
<rect x="403" y="199" width="3" height="5"/>
<rect x="408" y="191" width="1" height="2"/>
<rect x="408" y="204" width="1" height="3"/>
<path d="M407 193h3v11h-3zM408 194v9h1v-9z" fill-rule="evenodd"/>
<rect x="412" y="193" width="1" height="12"/>
<path d="M411 189h3v4h-3zM412 190v2h1v-2z" fill-rule="evenodd"/>
<rect x="416" y="186" width="1" height="9"/>
<rect x="415" y="188" width="3" height="3"/>
<rect x="420" y="188" width="1" height="11"/>
<rect x="419" y="188" width="3" height="8"/>
<rect x="424" y="184" width="1" height="3"/>
<rect x="424" y="195" width="1" height="10"/>
<path d="M423 187h3v8h-3zM424 188v6h1v-6z" fill-rule="evenodd"/>
<rect x="428" y="184" width="1" height="7"/>
<rect x="427" y="188" width="3" height="1"/>
<rect x="432" y="186" width="1" height="11"/>
<rect x="431" y="187" width="3" height="9"/>
<rect x="436" y="194" width="1" height="9"/>
<rect x="435" y="195" width="3" height="4"/>
<rect x="440" y="174" width="1" height="3"/>
<rect x="440" y="199" width="1" height="10"/>
<path d="M439 177h3v22h-3zM440 178v20h1v-20z" fill-rule="evenodd"/>
<rect x="444" y="176" width="1" height="24"/>
<rect x="443" y="177" width="3" height="22"/>
<rect x="448" y="194" width="1" height="14"/>
<rect x="447" y="197" width="3" height="10"/>
<rect x="452" y="187" width="1" height="1"/>
<rect x="452" y="205" width="1" height="4"/>
<path d="M451 188h3v17h-3zM452 189v15h1v-15z" fill-rule="evenodd"/>
<rect x="456" y="188" width="1" height="7"/>
<rect x="455" y="189" width="3" height="4"/>
<rect x="343" y="129" width="3" height="37"/>
<rect x="343" y="167" width="3" height="6"/>
<rect x="343" y="174" width="3" height="1"/>
<rect x="344" y="175" width="1" height="6"/>
<rect x="348" y="153" width="1" height="13"/>
<rect x="348" y="167" width="1" height="2"/>
<rect x="347" y="168" width="1" height="5"/>
<rect x="349" y="168" width="1" height="5"/>
<rect x="347" y="174" width="1" height="3"/>
<rect x="349" y="174" width="1" height="3"/>
<rect x="348" y="176" width="1" height="7"/>
<rect x="352" y="167" width="1" height="2"/>
<rect x="351" y="169" width="1" height="3"/>
<rect x="353" y="169" width="1" height="3"/>
<rect x="352" y="172" width="1" height="1"/>
<rect x="352" y="174" width="1" height="9"/>
<rect x="356" y="155" width="1" height="10"/>
<rect x="355" y="165" width="3" height="1"/>
<rect x="355" y="167" width="1" height="3"/>
<rect x="357" y="167" width="1" height="3"/>
<rect x="356" y="169" width="1" height="4"/>
<rect x="356" y="174" width="1" height="1"/>
<rect x="359" y="165" width="3" height="1"/>
<rect x="359" y="167" width="3" height="6"/>
<rect x="359" y="174" width="3" height="14"/>
<rect x="360" y="188" width="1" height="13"/>
<g fill="none" stroke="#f01010" shape-rendering="auto"><path d="M356.500 130V153" stroke-width="4"/><path d="M348.200 144.500L356.500 154L364.800 144.500" stroke-width="2.700"/></g>
<rect x="464" y="14" width="6" height="1"/>
<rect x="464" y="24" width="3" height="1"/>
<rect x="464" y="34" width="6" height="1"/>
<rect x="464" y="44" width="3" height="1"/>
<rect x="464" y="54" width="6" height="1"/>
<rect x="464" y="64" width="3" height="1"/>
<rect x="464" y="75" width="6" height="1"/>
<rect x="464" y="85" width="3" height="1"/>
<rect x="464" y="95" width="6" height="1"/>
<rect x="464" y="105" width="3" height="1"/>
<rect x="464" y="115" width="6" height="1"/>
<rect x="464" y="125" width="3" height="1"/>
<rect x="464" y="136" width="6" height="1"/>
<rect x="464" y="146" width="3" height="1"/>
<rect x="464" y="156" width="6" height="1"/>
<rect x="464" y="166" width="3" height="1"/>
<rect x="464" y="176" width="6" height="1"/>
<rect x="464" y="186" width="3" height="1"/>
<rect x="464" y="197" width="6" height="1"/>
<rect x="464" y="207" width="3" height="1"/>
<rect x="464" y="217" width="6" height="1"/>
<rect x="464" y="227" width="3" height="1"/>
<rect x="464" y="237" width="6" height="1"/>
<rect x="464" y="248" width="3" height="1"/>
<rect x="464" y="258" width="6" height="1"/>
<rect x="464" y="268" width="3" height="1"/>
<rect x="464" y="278" width="6" height="1"/>
<rect x="464" y="288" width="3" height="1"/>
<rect x="464" y="298" width="6" height="1"/>
<rect x="464" y="309" width="3" height="1"/>
<rect x="464" y="319" width="6" height="1"/>
<rect x="464" y="329" width="3" height="1"/>
<rect x="464" y="339" width="6" height="1"/>
<rect x="464" y="349" width="3" height="1"/>
<rect x="464" y="359" width="6" height="1"/>
<rect x="464" y="370" width="3" height="1"/>
<rect x="464" y="380" width="6" height="1"/>
<rect x="464" y="390" width="3" height="1"/>
<rect x="464" y="400" width="6" height="1"/>
<rect x="464" y="410" width="3" height="1"/>
<rect x="464" y="420" width="6" height="1"/>
<rect x="464" y="431" width="3" height="1"/>
<rect x="464" y="441" width="6" height="1"/>
<rect x="464" y="451" width="3" height="1"/>
<rect x="464" y="461" width="6" height="1"/>
<rect x="464" y="471" width="3" height="1"/>
<rect x="464" y="482" width="6" height="1"/>
<rect x="464" y="492" width="3" height="1"/>
<rect x="464" y="502" width="6" height="1"/>
<rect x="0" y="512" width="464" height="1"/><rect x="0" y="529" width="464" height="1"/><rect x="0" y="546" width="464" height="1"/><rect x="0" y="512" width="1" height="35"/>
<rect x="30" y="512" width="1" height="17"/>
<rect x="78" y="512" width="1" height="17"/>
<rect x="122" y="512" width="1" height="17"/>
<rect x="169" y="512" width="1" height="17"/>
<rect x="217" y="512" width="1" height="17"/>
<rect x="265" y="512" width="1" height="17"/>
<rect x="344" y="512" width="1" height="17"/>
<rect x="392" y="512" width="1" height="17"/>
<rect x="440" y="512" width="1" height="17"/>
</g>
<g class="ax2" fill="#000">
<text transform="translate(471.5 19.2) scale(0.84 1)">130 000</text>
<text transform="translate(471.5 39.2) scale(0.84 1)">129 900</text>
<text transform="translate(471.5 59.2) scale(0.84 1)">129 800</text>
<text transform="translate(471.5 80.2) scale(0.84 1)">129 700</text>
<text transform="translate(471.5 100.2) scale(0.84 1)">129 600</text>
<text transform="translate(471.5 120.2) scale(0.84 1)">129 500</text>
<text transform="translate(471.5 141.2) scale(0.84 1)">129 400</text>
<text transform="translate(471.5 161.1) scale(0.84 1)">129 300</text>
<text transform="translate(471.5 181.1) scale(0.84 1)">129 200</text>
<text transform="translate(471.5 222.1) scale(0.84 1)">129 000</text>
<text transform="translate(471.5 242.1) scale(0.84 1)">128 900</text>
<text transform="translate(471.5 263.1) scale(0.84 1)">128 800</text>
<text transform="translate(471.5 283.1) scale(0.84 1)">128 700</text>
<text transform="translate(471.5 303.1) scale(0.84 1)">128 600</text>
<text transform="translate(471.5 324.1) scale(0.84 1)">128 500</text>
<text transform="translate(471.5 344.1) scale(0.84 1)">128 400</text>
<text transform="translate(471.5 364.1) scale(0.84 1)">128 300</text>
<text transform="translate(471.5 385.1) scale(0.84 1)">128 200</text>
<text transform="translate(471.5 405.1) scale(0.84 1)">128 100</text>
<text transform="translate(471.5 425.1) scale(0.84 1)">128 000</text>
<text transform="translate(471.5 446.1) scale(0.84 1)">127 900</text>
<text transform="translate(471.5 466.1) scale(0.84 1)">127 800</text>
<text transform="translate(471.5 487.1) scale(0.84 1)">127 700</text>
<text transform="translate(471.5 507.1) scale(0.84 1)">127 600</text>
<rect x="469" y="185" width="44" height="16" fill="#d8d8d8" stroke="#000" stroke-width="1" transform="translate(.5,.5)"/><text transform="translate(471.5 198) scale(0.84 1)">129 120</text>
<rect x="471" y="461" width="36" height="14" fill="#f87c7c"/><text transform="translate(472 472.2) scale(0.84 1)">127774</text>
<text transform="translate(34 524.9) scale(0.84 1)">13h</text>
<text transform="translate(82 524.9) scale(0.84 1)">14h</text>
<text transform="translate(126 524.9) scale(0.84 1)">15h</text>
<text transform="translate(173 524.9) scale(0.84 1)">16h</text>
<text transform="translate(221 524.9) scale(0.84 1)">17h</text>
<text transform="translate(269 524.9) scale(0.84 1)">18h</text>
<text transform="translate(348 524.9) scale(0.84 1)">20h</text>
<text transform="translate(396 524.9) scale(0.84 1)">21h</text>
<text transform="translate(444 524.9) scale(0.84 1)">22h</text>
</g></svg>
<svg class="abs chart" style="left:864px;top:112px" width="494" height="561" viewBox="0 0 494 561" shape-rendering="crispEdges">
<g fill="#000">
<rect x="0" y="7" width="446" height="1"/><rect x="0" y="7" width="1" height="498"/><rect x="0" y="504" width="446" height="1"/><rect x="445" y="7" width="1" height="498"/>
<rect x="1" y="121" width="443" height="2" fill="#e8858a"/>
<rect x="1" y="154" width="443" height="2" fill="#e8858a"/>
<rect x="1" y="225" width="443" height="2" fill="#e8858a"/>
<rect x="1" y="303" width="443" height="2" fill="#e8858a"/>
<rect x="3" y="302" width="1" height="32"/>
<rect x="2" y="305" width="3" height="7"/>
<rect x="8" y="297" width="1" height="72"/>
<rect x="7" y="311" width="3" height="29"/>
<rect x="12" y="336" width="1" height="15"/>
<rect x="11" y="340" width="3" height="3"/>
<rect x="17" y="344" width="1" height="37"/>
<rect x="16" y="344" width="3" height="6"/>
<rect x="22" y="321" width="1" height="3"/>
<rect x="22" y="350" width="1" height="19"/>
<path d="M21 324h3v26h-3zM22 325v24h1v-24z" fill-rule="evenodd"/>
<rect x="26" y="294" width="1" height="26"/>
<rect x="26" y="325" width="1" height="4"/>
<path d="M25 320h3v5h-3zM26 321v3h1v-3z" fill-rule="evenodd"/>
<rect x="31" y="315" width="1" height="36"/>
<rect x="30" y="320" width="3" height="22"/>
<rect x="36" y="301" width="1" height="7"/>
<rect x="36" y="345" width="1" height="5"/>
<path d="M35 308h3v37h-3zM36 309v35h1v-35z" fill-rule="evenodd"/>
<rect x="40" y="304" width="1" height="40"/>
<rect x="39" y="308" width="3" height="17"/>
<rect x="45" y="299" width="1" height="7"/>
<rect x="45" y="325" width="1" height="12"/>
<path d="M44 306h3v19h-3zM45 307v17h1v-17z" fill-rule="evenodd"/>
<rect x="50" y="289" width="1" height="5"/>
<rect x="50" y="306" width="1" height="12"/>
<path d="M49 294h3v12h-3zM50 295v10h1v-10z" fill-rule="evenodd"/>
<rect x="55" y="272" width="1" height="5"/>
<rect x="55" y="294" width="1" height="9"/>
<path d="M54 277h3v17h-3zM55 278v15h1v-15z" fill-rule="evenodd"/>
<rect x="59" y="263" width="1" height="3"/>
<rect x="59" y="278" width="1" height="18"/>
<path d="M58 266h3v12h-3zM59 267v10h1v-10z" fill-rule="evenodd"/>
<rect x="64" y="261" width="1" height="89"/>
<rect x="63" y="267" width="3" height="52"/>
<rect x="69" y="305" width="1" height="12"/>
<rect x="69" y="320" width="1" height="8"/>
<path d="M68 317h3v3h-3zM69 318v1h1v-1z" fill-rule="evenodd"/>
<rect x="73" y="321" width="1" height="52"/>
<rect x="72" y="321" width="3" height="23"/>
<rect x="78" y="317" width="1" height="5"/>
<rect x="78" y="344" width="1" height="16"/>
<path d="M77 322h3v22h-3zM78 323v20h1v-20z" fill-rule="evenodd"/>
<rect x="83" y="283" width="1" height="18"/>
<rect x="83" y="321" width="1" height="8"/>
<path d="M82 301h3v20h-3zM83 302v18h1v-18z" fill-rule="evenodd"/>
<rect x="88" y="277" width="1" height="4"/>
<rect x="88" y="301" width="1" height="5"/>
<path d="M87 281h3v20h-3zM88 282v18h1v-18z" fill-rule="evenodd"/>
<rect x="92" y="152" width="1" height="159"/>
<rect x="91" y="279" width="3" height="31"/>
<rect x="97" y="305" width="1" height="23"/>
<rect x="96" y="309" width="3" height="11"/>
<rect x="102" y="308" width="1" height="28"/>
<rect x="101" y="319" width="3" height="15"/>
<rect x="106" y="322" width="1" height="72"/>
<rect x="105" y="332" width="3" height="53"/>
<rect x="111" y="361" width="1" height="91"/>
<rect x="110" y="381" width="3" height="64"/>
<rect x="116" y="430" width="1" height="31"/>
<rect x="115" y="443" width="3" height="13"/>
<rect x="121" y="379" width="1" height="14"/>
<rect x="121" y="455" width="1" height="5"/>
<path d="M120 393h3v62h-3zM121 394v60h1v-60z" fill-rule="evenodd"/>
<rect x="125" y="365" width="1" height="1"/>
<rect x="125" y="394" width="1" height="5"/>
<path d="M124 366h3v28h-3zM125 367v26h1v-26z" fill-rule="evenodd"/>
<rect x="130" y="318" width="1" height="1"/>
<rect x="130" y="365" width="1" height="4"/>
<path d="M129 319h3v46h-3zM130 320v44h1v-44z" fill-rule="evenodd"/>
<rect x="135" y="301" width="1" height="10"/>
<rect x="135" y="320" width="1" height="15"/>
<path d="M134 311h3v9h-3zM135 312v7h1v-7z" fill-rule="evenodd"/>
<rect x="139" y="311" width="1" height="38"/>
<rect x="138" y="311" width="3" height="15"/>
<rect x="144" y="312" width="1" height="6"/>
<rect x="144" y="326" width="1" height="4"/>
<path d="M143 318h3v8h-3zM144 319v6h1v-6z" fill-rule="evenodd"/>
<rect x="149" y="320" width="1" height="57"/>
<rect x="148" y="320" width="3" height="45"/>
<rect x="154" y="332" width="1" height="12"/>
<rect x="154" y="365" width="1" height="7"/>
<path d="M153 344h3v21h-3zM154 345v19h1v-19z" fill-rule="evenodd"/>
<rect x="158" y="323" width="1" height="32"/>
<rect x="157" y="344" width="3" height="7"/>
<rect x="163" y="339" width="1" height="18"/>
<rect x="162" y="351" width="3" height="1"/>
<rect x="168" y="338" width="1" height="30"/>
<rect x="167" y="347" width="3" height="15"/>
<rect x="172" y="335" width="1" height="6"/>
<rect x="172" y="362" width="1" height="7"/>
<path d="M171 341h3v21h-3zM172 342v19h1v-19z" fill-rule="evenodd"/>
<rect x="177" y="332" width="1" height="34"/>
<rect x="176" y="341" width="3" height="7"/>
<rect x="182" y="344" width="1" height="9"/>
<rect x="181" y="347" width="3" height="1"/>
<rect x="186" y="336" width="1" height="1"/>
<rect x="186" y="347" width="1" height="35"/>
<path d="M185 337h3v10h-3zM186 338v8h1v-8z" fill-rule="evenodd"/>
<rect x="191" y="294" width="1" height="10"/>
<rect x="191" y="338" width="1" height="1"/>
<path d="M190 304h3v34h-3zM191 305v32h1v-32z" fill-rule="evenodd"/>
<rect x="196" y="269" width="1" height="3"/>
<rect x="196" y="304" width="1" height="5"/>
<path d="M195 272h3v32h-3zM196 273v30h1v-30z" fill-rule="evenodd"/>
<rect x="201" y="273" width="1" height="3"/>
<path d="M200 256h3v17h-3zM201 257v15h1v-15z" fill-rule="evenodd"/>
<rect x="205" y="164" width="1" height="8"/>
<path d="M204 172h3v85h-3zM205 173v83h1v-83z" fill-rule="evenodd"/>
<rect x="210" y="160" width="1" height="30"/>
<rect x="209" y="171" width="3" height="15"/>
<rect x="215" y="178" width="1" height="25"/>
<rect x="214" y="185" width="3" height="5"/>
<rect x="219" y="182" width="1" height="31"/>
<rect x="218" y="189" width="3" height="18"/>
<rect x="224" y="166" width="1" height="59"/>
<rect x="223" y="208" width="3" height="11"/>
<rect x="229" y="165" width="1" height="6"/>
<rect x="229" y="218" width="1" height="6"/>
<path d="M228 171h3v47h-3zM229 172v45h1v-45z" fill-rule="evenodd"/>
<rect x="234" y="169" width="1" height="44"/>
<rect x="233" y="171" width="3" height="31"/>
<rect x="238" y="201" width="1" height="9"/>
<path d="M237 184h3v17h-3zM238 185v15h1v-15z" fill-rule="evenodd"/>
<rect x="243" y="135" width="1" height="21"/>
<rect x="243" y="184" width="1" height="1"/>
<path d="M242 156h3v28h-3zM243 157v26h1v-26z" fill-rule="evenodd"/>
<rect x="248" y="147" width="1" height="70"/>
<rect x="247" y="156" width="3" height="61"/>
<rect x="252" y="183" width="1" height="17"/>
<path d="M251 200h3v16h-3zM252 201v14h1v-14z" fill-rule="evenodd"/>
<rect x="257" y="195" width="1" height="50"/>
<rect x="256" y="200" width="3" height="29"/>
<rect x="262" y="204" width="1" height="1"/>
<rect x="262" y="230" width="1" height="22"/>
<path d="M261 205h3v25h-3zM262 206v23h1v-23z" fill-rule="evenodd"/>
<rect x="267" y="194" width="1" height="43"/>
<rect x="266" y="205" width="3" height="24"/>
<rect x="271" y="197" width="1" height="11"/>
<rect x="271" y="229" width="1" height="16"/>
<path d="M270 208h3v21h-3zM271 209v19h1v-19z" fill-rule="evenodd"/>
<rect x="276" y="190" width="1" height="2"/>
<rect x="276" y="208" width="1" height="7"/>
<path d="M275 192h3v16h-3zM276 193v14h1v-14z" fill-rule="evenodd"/>
<rect x="281" y="144" width="1" height="7"/>
<rect x="281" y="190" width="1" height="7"/>
<path d="M280 151h3v39h-3zM281 152v37h1v-37z" fill-rule="evenodd"/>
<rect x="285" y="127" width="1" height="19"/>
<rect x="285" y="152" width="1" height="9"/>
<path d="M284 146h3v6h-3zM285 147v4h1v-4z" fill-rule="evenodd"/>
<rect x="290" y="142" width="1" height="35"/>
<rect x="289" y="145" width="3" height="7"/>
<rect x="295" y="131" width="1" height="1"/>
<rect x="295" y="151" width="1" height="1"/>
<path d="M294 132h3v19h-3zM295 133v17h1v-17z" fill-rule="evenodd"/>
<rect x="300" y="124" width="1" height="55"/>
<rect x="299" y="135" width="3" height="27"/>
<rect x="304" y="162" width="1" height="61"/>
<rect x="303" y="162" width="3" height="54"/>
<rect x="309" y="193" width="1" height="4"/>
<rect x="309" y="216" width="1" height="8"/>
<path d="M308 197h3v19h-3zM309 198v17h1v-17z" fill-rule="evenodd"/>
<rect x="314" y="196" width="1" height="25"/>
<rect x="313" y="197" width="3" height="15"/>
<rect x="318" y="149" width="1" height="4"/>
<rect x="318" y="210" width="1" height="6"/>
<path d="M317 153h3v57h-3zM318 154v55h1v-55z" fill-rule="evenodd"/>
<rect x="323" y="151" width="1" height="28"/>
<rect x="322" y="153" width="3" height="16"/>
<rect x="328" y="156" width="1" height="23"/>
<rect x="327" y="169" width="3" height="3"/>
<rect x="332" y="150" width="1" height="5"/>
<rect x="332" y="172" width="1" height="18"/>
<path d="M331 155h3v17h-3zM332 156v15h1v-15z" fill-rule="evenodd"/>
<rect x="337" y="155" width="1" height="92"/>
<rect x="336" y="155" width="3" height="92"/>
<rect x="342" y="240" width="1" height="27"/>
<rect x="341" y="246" width="3" height="7"/>
<rect x="347" y="244" width="1" height="66"/>
<rect x="346" y="253" width="3" height="7"/>
<path d="M350 228h3v32h-3zM351 229v30h1v-30z" fill-rule="evenodd"/>
<rect x="356" y="224" width="1" height="38"/>
<rect x="355" y="228" width="3" height="30"/>
<rect x="361" y="249" width="1" height="27"/>
<rect x="360" y="257" width="3" height="8"/>
<rect x="365" y="252" width="1" height="51"/>
<rect x="364" y="264" width="3" height="31"/>
<rect x="370" y="262" width="1" height="8"/>
<rect x="370" y="295" width="1" height="2"/>
<path d="M369 270h3v25h-3zM370 271v23h1v-23z" fill-rule="evenodd"/>
<rect x="375" y="233" width="1" height="2"/>
<rect x="375" y="272" width="1" height="17"/>
<path d="M374 235h3v37h-3zM375 236v35h1v-35z" fill-rule="evenodd"/>
<rect x="380" y="203" width="1" height="18"/>
<rect x="380" y="236" width="1" height="9"/>
<path d="M379 221h3v15h-3zM380 222v13h1v-13z" fill-rule="evenodd"/>
<rect x="384" y="188" width="1" height="4"/>
<rect x="384" y="222" width="1" height="1"/>
<path d="M383 192h3v30h-3zM384 193v28h1v-28z" fill-rule="evenodd"/>
<rect x="389" y="179" width="1" height="3"/>
<rect x="389" y="194" width="1" height="2"/>
<path d="M388 182h3v12h-3zM389 183v10h1v-10z" fill-rule="evenodd"/>
<rect x="394" y="156" width="1" height="66"/>
<rect x="393" y="181" width="3" height="36"/>
<rect x="398" y="210" width="1" height="28"/>
<rect x="397" y="216" width="3" height="11"/>
<rect x="403" y="176" width="1" height="16"/>
<rect x="403" y="228" width="1" height="2"/>
<path d="M402 192h3v36h-3zM403 193v34h1v-34z" fill-rule="evenodd"/>
<rect x="408" y="173" width="1" height="5"/>
<rect x="408" y="193" width="1" height="3"/>
<path d="M407 178h3v15h-3zM408 179v13h1v-13z" fill-rule="evenodd"/>
<rect x="413" y="98" width="1" height="2"/>
<path d="M412 100h3v74h-3zM413 101v72h1v-72z" fill-rule="evenodd"/>
<rect x="417" y="68" width="1" height="21"/>
<rect x="417" y="100" width="1" height="23"/>
<path d="M416 89h3v11h-3zM417 90v9h1v-9z" fill-rule="evenodd"/>
<rect x="422" y="50" width="1" height="13"/>
<rect x="422" y="89" width="1" height="11"/>
<path d="M421 63h3v26h-3zM422 64v24h1v-24z" fill-rule="evenodd"/>
<rect x="427" y="63" width="1" height="19"/>
<rect x="426" y="63" width="3" height="12"/>
<rect x="446" y="11" width="3" height="1"/>
<rect x="446" y="14" width="3" height="1"/>
<rect x="446" y="18" width="3" height="1"/>
<rect x="446" y="21" width="3" height="1"/>
<rect x="446" y="25" width="6" height="1"/>
<rect x="446" y="28" width="3" height="1"/>
<rect x="446" y="32" width="3" height="1"/>
<rect x="446" y="36" width="3" height="1"/>
<rect x="446" y="39" width="3" height="1"/>
<rect x="446" y="43" width="6" height="1"/>
<rect x="446" y="46" width="3" height="1"/>
<rect x="446" y="50" width="3" height="1"/>
<rect x="446" y="53" width="3" height="1"/>
<rect x="446" y="57" width="3" height="1"/>
<rect x="446" y="60" width="6" height="1"/>
<rect x="446" y="64" width="3" height="1"/>
<rect x="446" y="68" width="3" height="1"/>
<rect x="446" y="71" width="3" height="1"/>
<rect x="446" y="75" width="3" height="1"/>
<rect x="446" y="78" width="6" height="1"/>
<rect x="446" y="82" width="3" height="1"/>
<rect x="446" y="85" width="3" height="1"/>
<rect x="446" y="89" width="3" height="1"/>
<rect x="446" y="92" width="3" height="1"/>
<rect x="446" y="96" width="6" height="1"/>
<rect x="446" y="99" width="3" height="1"/>
<rect x="446" y="103" width="3" height="1"/>
<rect x="446" y="107" width="3" height="1"/>
<rect x="446" y="110" width="3" height="1"/>
<rect x="446" y="114" width="6" height="1"/>
<rect x="446" y="117" width="3" height="1"/>
<rect x="446" y="121" width="3" height="1"/>
<rect x="446" y="124" width="3" height="1"/>
<rect x="446" y="128" width="3" height="1"/>
<rect x="446" y="131" width="6" height="1"/>
<rect x="446" y="135" width="3" height="1"/>
<rect x="446" y="138" width="3" height="1"/>
<rect x="446" y="142" width="3" height="1"/>
<rect x="446" y="146" width="3" height="1"/>
<rect x="446" y="149" width="6" height="1"/>
<rect x="446" y="153" width="3" height="1"/>
<rect x="446" y="156" width="3" height="1"/>
<rect x="446" y="160" width="3" height="1"/>
<rect x="446" y="163" width="3" height="1"/>
<rect x="446" y="167" width="6" height="1"/>
<rect x="446" y="170" width="3" height="1"/>
<rect x="446" y="174" width="3" height="1"/>
<rect x="446" y="178" width="3" height="1"/>
<rect x="446" y="181" width="3" height="1"/>
<rect x="446" y="185" width="6" height="1"/>
<rect x="446" y="188" width="3" height="1"/>
<rect x="446" y="192" width="3" height="1"/>
<rect x="446" y="195" width="3" height="1"/>
<rect x="446" y="199" width="3" height="1"/>
<rect x="446" y="202" width="6" height="1"/>
<rect x="446" y="206" width="3" height="1"/>
<rect x="446" y="210" width="3" height="1"/>
<rect x="446" y="213" width="3" height="1"/>
<rect x="446" y="217" width="3" height="1"/>
<rect x="446" y="220" width="6" height="1"/>
<rect x="446" y="224" width="3" height="1"/>
<rect x="446" y="227" width="3" height="1"/>
<rect x="446" y="231" width="3" height="1"/>
<rect x="446" y="234" width="3" height="1"/>
<rect x="446" y="238" width="6" height="1"/>
<rect x="446" y="241" width="3" height="1"/>
<rect x="446" y="245" width="3" height="1"/>
<rect x="446" y="249" width="3" height="1"/>
<rect x="446" y="252" width="3" height="1"/>
<rect x="446" y="256" width="6" height="1"/>
<rect x="446" y="259" width="3" height="1"/>
<rect x="446" y="263" width="3" height="1"/>
<rect x="446" y="266" width="3" height="1"/>
<rect x="446" y="270" width="3" height="1"/>
<rect x="446" y="273" width="6" height="1"/>
<rect x="446" y="277" width="3" height="1"/>
<rect x="446" y="280" width="3" height="1"/>
<rect x="446" y="284" width="3" height="1"/>
<rect x="446" y="288" width="3" height="1"/>
<rect x="446" y="291" width="6" height="1"/>
<rect x="446" y="295" width="3" height="1"/>
<rect x="446" y="298" width="3" height="1"/>
<rect x="446" y="302" width="3" height="1"/>
<rect x="446" y="305" width="3" height="1"/>
<rect x="446" y="309" width="6" height="1"/>
<rect x="446" y="312" width="3" height="1"/>
<rect x="446" y="316" width="3" height="1"/>
<rect x="446" y="320" width="3" height="1"/>
<rect x="446" y="323" width="3" height="1"/>
<rect x="446" y="327" width="6" height="1"/>
<rect x="446" y="330" width="3" height="1"/>
<rect x="446" y="334" width="3" height="1"/>
<rect x="446" y="337" width="3" height="1"/>
<rect x="446" y="341" width="3" height="1"/>
<rect x="446" y="344" width="6" height="1"/>
<rect x="446" y="348" width="3" height="1"/>
<rect x="446" y="352" width="3" height="1"/>
<rect x="446" y="355" width="3" height="1"/>
<rect x="446" y="359" width="3" height="1"/>
<rect x="446" y="362" width="6" height="1"/>
<rect x="446" y="366" width="3" height="1"/>
<rect x="446" y="369" width="3" height="1"/>
<rect x="446" y="373" width="3" height="1"/>
<rect x="446" y="376" width="3" height="1"/>
<rect x="446" y="380" width="6" height="1"/>
<rect x="446" y="383" width="3" height="1"/>
<rect x="446" y="387" width="3" height="1"/>
<rect x="446" y="391" width="3" height="1"/>
<rect x="446" y="394" width="3" height="1"/>
<rect x="446" y="398" width="6" height="1"/>
<rect x="446" y="401" width="3" height="1"/>
<rect x="446" y="405" width="3" height="1"/>
<rect x="446" y="408" width="3" height="1"/>
<rect x="446" y="412" width="3" height="1"/>
<rect x="446" y="415" width="6" height="1"/>
<rect x="446" y="419" width="3" height="1"/>
<rect x="446" y="422" width="3" height="1"/>
<rect x="446" y="426" width="3" height="1"/>
<rect x="446" y="430" width="3" height="1"/>
<rect x="446" y="433" width="6" height="1"/>
<rect x="446" y="437" width="3" height="1"/>
<rect x="446" y="440" width="3" height="1"/>
<rect x="446" y="444" width="3" height="1"/>
<rect x="446" y="447" width="3" height="1"/>
<rect x="446" y="451" width="6" height="1"/>
<rect x="446" y="454" width="3" height="1"/>
<rect x="446" y="458" width="3" height="1"/>
<rect x="446" y="462" width="3" height="1"/>
<rect x="446" y="465" width="3" height="1"/>
<rect x="446" y="469" width="6" height="1"/>
<rect x="446" y="472" width="3" height="1"/>
<rect x="446" y="476" width="3" height="1"/>
<rect x="446" y="479" width="3" height="1"/>
<rect x="446" y="483" width="3" height="1"/>
<rect x="446" y="486" width="6" height="1"/>
<rect x="446" y="490" width="3" height="1"/>
<rect x="446" y="494" width="3" height="1"/>
<rect x="446" y="497" width="3" height="1"/>
<rect x="446" y="501" width="3" height="1"/>
<rect x="0" y="512" width="445" height="1"/><rect x="0" y="529" width="445" height="1"/><rect x="0" y="546" width="445" height="1"/><rect x="0" y="512" width="1" height="35"/>
<rect x="36" y="512" width="1" height="17"/>
<rect x="92" y="512" width="1" height="17"/>
<rect x="149" y="512" width="1" height="17"/>
<rect x="206" y="512" width="1" height="17"/>
<rect x="262" y="512" width="1" height="17"/>
<rect x="319" y="512" width="1" height="17"/>
<rect x="375" y="512" width="1" height="17"/>
<rect x="375" y="529" width="1" height="17"/>
</g>
<g class="ax2" fill="#000">
<text transform="translate(453.6 30.2) scale(0.84 1)">130 500</text>
<text transform="translate(453.6 48.2) scale(0.84 1)">130 000</text>
<text transform="translate(453.6 65.2) scale(0.84 1)">129 500</text>
<text transform="translate(453.6 83.2) scale(0.84 1)">129 000</text>
<text transform="translate(453.6 101.2) scale(0.84 1)">128 500</text>
<text transform="translate(453.6 119.2) scale(0.84 1)">128 000</text>
<text transform="translate(453.6 136.2) scale(0.84 1)">127 500</text>
<text transform="translate(453.6 154.1) scale(0.84 1)">127 000</text>
<text transform="translate(453.6 172.1) scale(0.84 1)">126 500</text>
<text transform="translate(453.6 190.1) scale(0.84 1)">126 000</text>
<text transform="translate(453.6 207.1) scale(0.84 1)">125 500</text>
<text transform="translate(453.6 225.1) scale(0.84 1)">125 000</text>
<text transform="translate(453.6 243.1) scale(0.84 1)">124 500</text>
<text transform="translate(453.6 261.1) scale(0.84 1)">124 000</text>
<text transform="translate(453.6 278.1) scale(0.84 1)">123 500</text>
<text transform="translate(453.6 296.1) scale(0.84 1)">123 000</text>
<text transform="translate(453.6 314.1) scale(0.84 1)">122 500</text>
<text transform="translate(453.6 332.1) scale(0.84 1)">122 000</text>
<text transform="translate(453.6 349.1) scale(0.84 1)">121 500</text>
<text transform="translate(453.6 367.1) scale(0.84 1)">121 000</text>
<text transform="translate(453.6 385.1) scale(0.84 1)">120 500</text>
<text transform="translate(453.6 403.1) scale(0.84 1)">120 000</text>
<text transform="translate(453.6 420.1) scale(0.84 1)">119 500</text>
<text transform="translate(453.6 438.1) scale(0.84 1)">119 000</text>
<text transform="translate(453.6 456.1) scale(0.84 1)">118 500</text>
<text transform="translate(453.6 474.1) scale(0.84 1)">118 000</text>
<text transform="translate(453.6 491.1) scale(0.84 1)">117 500</text>
<rect x="451" y="66" width="44" height="16" fill="#d8d8d8" stroke="#000" stroke-width="1" transform="translate(.5,.5)"/><text transform="translate(453.6 79) scale(0.84 1)">129 120</text>
<rect x="453" y="115" width="36" height="14" fill="#f87c7c"/><text transform="translate(453.6 127.2) scale(0.84 1)">127774</text>
<rect x="453" y="148" width="36" height="14" fill="#f87c7c"/><text transform="translate(453.6 160.1) scale(0.84 1)">126845</text>
<rect x="453" y="219" width="36" height="14" fill="#f87c7c"/><text transform="translate(453.6 231.1) scale(0.84 1)">124842</text>
<rect x="453" y="297" width="36" height="14" fill="#f87c7c"/><text transform="translate(453.6 309.1) scale(0.84 1)">122626</text>
<text transform="translate(40 524.9) scale(0.84 1)">8</text>
<text transform="translate(96 524.9) scale(0.84 1)">13</text>
<text transform="translate(153 524.9) scale(0.84 1)">16</text>
<text transform="translate(210 524.9) scale(0.84 1)">21</text>
<text transform="translate(266 524.9) scale(0.84 1)">24</text>
<text transform="translate(323 524.9) scale(0.84 1)">29</text>
<text transform="translate(379 524.9) scale(0.84 1)">3</text>
<text transform="translate(379 541.9) scale(0.84 1)">Aug</text>
</g></svg>
<!-- scrollbars -->
<div class="sb" style="left:337px;top:659px;width:512px"><i style="left:311px;width:184px"></i>
  <svg class="abs" style="left:4px;top:3px" width="9" height="9" viewBox="0 0 9 9" fill="none" stroke="#505050" stroke-width="1.900"><path d="M6.500 1.200L2.700 4.500L6.500 7.800"/></svg>
  <svg class="abs" style="left:499px;top:3px" width="9" height="9" viewBox="0 0 9 9" fill="none" stroke="#505050" stroke-width="1.900"><path d="M3 1.200L6.800 4.500L3 7.800"/></svg>
</div>
<div class="sb" style="left:864px;top:659px;width:494px"><i style="left:334px;width:143px"></i>
  <svg class="abs" style="left:4px;top:3px" width="9" height="9" viewBox="0 0 9 9" fill="none" stroke="#505050" stroke-width="1.900"><path d="M6.500 1.200L2.700 4.500L6.500 7.800"/></svg>
  <svg class="abs" style="left:481px;top:3px" width="9" height="9" viewBox="0 0 9 9" fill="none" stroke="#505050" stroke-width="1.900"><path d="M3 1.200L6.800 4.500L3 7.800"/></svg>
</div>
<!-- ===== tabs ===== -->
<div id="tabs" class="abs">
  <div class="tab" style="left:2px;width:98px;padding-left:5px"><span id="tb0">опционы-Учёба</span></div>
  <div class="tab" style="left:100px;width:60px;padding-left:5px"><span id="tb1">торговля</span></div>
  <div class="tab" style="left:160px;width:132px;padding-left:6px;background:#fff;top:0;height:25px;border-top:0;line-height:26px;border-right:1px solid #dcdcdc"><span id="tb2">торговля фьючерсом</span></div>
</div>
<!-- ===== status bar ===== -->
<div id="status" class="abs">
  <div class="t" id="stxt" style="left:2.5px;top:6px;font-size:12.5px">Время сервера: 22:21:17; последняя полученная запись: 77362224</div>
  <div class="abs" style="left:947px;top:1px;width:1px;height:21px;background:#dcdcdc"></div>
  <div class="abs" style="left:1101px;top:1px;width:1px;height:21px;background:#dcdcdc"></div>
  <div class="abs" style="left:1190px;top:1px;width:1px;height:21px;background:#dcdcdc"></div>
  <div class="abs" style="left:1215px;top:1px;width:1px;height:21px;background:#dcdcdc"></div>
  <svg class="abs" style="left:950px;top:2px" width="18" height="18" viewBox="950 708 18 18"><path d="M958 712.500H966.500V724.500H958" fill="none" stroke="#2222c8" stroke-width="1"/><g shape-rendering="crispEdges"><rect x="952" y="709" width="6" height="5" fill="#22c8c8"/><rect x="951" y="714" width="8" height="2" fill="#444"/><rect x="952" y="718" width="6" height="5" fill="#22c8c8"/><rect x="951" y="723" width="8" height="2" fill="#444"/></g><circle cx="963.500" cy="717.500" r="3.200" fill="#d9d9a8" stroke="#222" stroke-width="1.200"/><path d="M961 716.500Q963.500 715 966 717.500" fill="none" stroke="#222" stroke-width=".8"/></svg>
  <div class="t" id="ip" style="left:971px;top:6px;font-size:12.5px">91.207.78.204:15100</div>
</div>
<!-- tooltip -->
<div class="abs" style="left:1231px;top:694px;width:99px;height:34px;box-sizing:border-box;background:#fff;border:1px solid #8a8a8a;box-shadow:1px 1px 2px rgba(0,0,0,.3)"></div>
<div class="t" id="tt0" style="left:1236px;top:698px;font-size:12px;color:#575757">6 августа 2020 г.</div>
<div class="t" id="tt1" style="left:1236px;top:712px;font-size:12px;color:#575757">четверг</div>
<!-- ===== taskbar ===== -->
<div id="taskbar" class="abs">
  <svg class="abs" style="left:16px;top:12px" width="16" height="16" viewBox="0 0 16 16" fill="#fff"><path d="M0 2.300L6.500 1.400V7.600H0ZM7.300 1.300L16 0V7.600H7.300ZM0 8.400H6.500V14.600L0 13.700ZM7.300 8.400H16V16L7.300 14.700Z"/></svg>
  <svg class="abs" style="left:60px;top:10px" width="24" height="20" viewBox="60 738 24 20" fill="none" stroke="#fff" stroke-width="1.300"><rect x="64.600" y="744.600" width="10" height="6"/><path d="M64.600 740.300V742.600H74.600V740.300M64.600 755V752.700H74.600V755M78.500 740.300V755"/><rect x="77" y="744.200" width="3" height="3.300" fill="#fff" stroke="none"/></svg>
  <!-- folder -->
  <svg class="abs" style="left:111.500px;top:10.500px" width="23" height="19" viewBox="0 0 26 22"><path d="M1 3q0-1.500 1.500-1.500h7l2 2.500h12q1.500 0 1.500 1.500V20H1Z" fill="#f5b93f"/><path d="M1 7h24v13H1Z" fill="#fbd665"/><path d="M7 14h12v6H7Z" fill="#3d8be0"/><path d="M10 17h6v3h-6Z" fill="#fbd665"/></svg>
  <!-- mail -->
  <svg class="abs" style="left:160px;top:9px" width="26" height="22" viewBox="0 0 26 22"><path d="M0 8L13 0L26 8V22H0Z" fill="#1b6fc2"/><path d="M2 8h22v10H2Z" fill="#fff"/><path d="M0 9L13 17L26 9V22H0Z" fill="#2e9be6"/></svg>
  <!-- quik active -->
  <div class="abs" style="left:197px;top:0;width:48px;height:40px;background:#474747"></div>
  <div class="abs" style="left:197px;top:38px;width:48px;height:2px;background:#76b9ed"></div>
  <svg class="abs" style="left:208px;top:6px" width="28" height="28" viewBox="0 0 28 28"><circle cx="12.700" cy="13.200" r="7.800" fill="none" stroke="#3a9479" stroke-width="4.400"/><path d="M13.500 20.500L20.500 26L20.500 16Z" fill="#3a9479"/></svg>
  <div class="abs" style="left:250px;top:38px;width:39px;height:2px;background:#76b9ed"></div>
  <svg class="abs" style="left:258px;top:8px" width="24" height="24" viewBox="0 0 24 24"><rect x="0" y="0" width="24" height="24" fill="#1d8fd6"/><rect x="2" y="2" width="20" height="20" fill="#fff"/><path d="M2 16L7 11L10 17L15 6L18 10L22 3" fill="none" stroke="#1d8fd6" stroke-width="2.500"/><rect x="2" y="18" width="20" height="4" fill="#1d8fd6"/></svg>
  <!-- tray -->
  <svg class="abs" style="left:998.700px;top:10.600px" width="17" height="17" viewBox="0 0 18 18"><path d="M14 3A7 7 0 1 0 14 15" fill="none" stroke="#d8322a" stroke-width="3.500"/><path d="M1 14L9 6L12 8L5 17Z" fill="#e9b469"/></svg>
  <svg class="abs" style="left:1024.500px;top:13.300px" width="14" height="13" viewBox="0 0 17 16"><rect x="1" y="1" width="15" height="14" fill="#444" stroke="#ddd" stroke-width="1.500"/><rect x="2" y="10.500" width="13" height="4" fill="#ddd"/></svg>
  <svg class="abs" style="left:1047.500px;top:12.800px" width="15" height="14" viewBox="0 0 18 16"><rect x="0" y="0" width="18" height="16" fill="#3b3f36"/><path d="M3 8q4-5 9-3v6q-5 2-9-3Z" fill="none" stroke="#76b900" stroke-width="1.800"/><rect x="10" y="3" width="6" height="10" fill="#76b900"/></svg>
  <svg class="abs" style="left:1071px;top:11.800px" width="16" height="16" viewBox="0 0 18 18"><rect x="0" y="0" width="18" height="18" fill="#2a8fd0"/><rect x="3" y="3" width="11" height="8" fill="none" stroke="#fff" stroke-width="1.200"/><path d="M0 14h18v4H0Z" fill="#d9c64a"/><rect x="9" y="8" width="6" height="6" fill="none" stroke="#dfeeff" stroke-width="1"/></svg>
  <svg class="abs" style="left:1097.400px;top:11.300px" width="12" height="17" viewBox="0 0 14 20"><ellipse cx="7" cy="10" rx="6" ry="9.500" fill="#1d7fe0"/><path d="M4 6.500L10 12.500L7 15.500V4.500L10 7.500L4 13.500" fill="none" stroke="#fff" stroke-width="1.200"/></svg>
  <svg class="abs" style="left:1119.500px;top:15.500px" width="16.500" height="10" viewBox="0 0 20 12"><rect x="1" y="1.500" width="16" height="9" fill="none" stroke="#fff" stroke-width="1.300"/><rect x="17.500" y="4" width="2" height="4" fill="#fff"/><rect x="3" y="3.500" width="5" height="5" fill="#fff"/></svg>
  <svg class="abs" style="left:1144px;top:13.300px" width="16" height="14.400" viewBox="0 0 20 18" fill="none" stroke="#fff" stroke-width="1.500"><path d="M3 16A13 13 0 0 1 16 3" opacity=".55"/><path d="M6.500 16A9.500 9.500 0 0 1 16 6.500"/><path d="M10 16A6 6 0 0 1 16 10"/><circle cx="15" cy="15" r="1.500" fill="#fff" stroke="none"/></svg>
  <svg class="abs" style="left:1166.600px;top:12.300px" width="17" height="15.300" viewBox="0 0 20 18" fill="none" stroke="#fff" stroke-width="1.300"><path d="M1.500 6.500H5L9.500 2.500V15.500L5 11.500H1.500Z"/><path d="M12 6.500Q13.500 9 12 11.500M14.500 4.500Q17 9 14.500 13.500"/><path d="M17 2.500Q20.500 9 17 15.500" opacity=".5"/></svg>
  <svg class="abs" style="left:1190px;top:11.400px" width="18.500" height="16.800" viewBox="0 0 22 20"><path d="M2 4.500L17 2V15L2 16Z" fill="none" stroke="#fff" stroke-width="1.400"/><path d="M6 9a3.500 3.500 0 0 1 6-2M13 10a3.500 3.500 0 0 1-6 2" fill="none" stroke="#fff" stroke-width="1.200"/><circle cx="17" cy="16" r="3.500" fill="#f39a1d"/></svg>
  <div class="t" id="eng" style="left:1217px;top:14px;font-size:12px">ENG</div>
  <div class="abs" style="left:1247px;top:0;width:66px;height:40px;background:#333"></div>
  <div class="t" style="left:1247px;width:66px;text-align:center;top:4.700px;font-size:12px"><span id="clk" style="margin-left:-2px">0:21</span></div>
  <div class="t" style="left:1247px;width:66px;text-align:center;top:22.700px;font-size:12px"><span id="dat">06.08.2020</span></div>
  <svg class="abs" style="left:1324px;top:11px" width="18" height="19" viewBox="0 0 18 19" fill="none" stroke="#fff" stroke-width="1.300"><path d="M1.500 1.500H16.500V13.500H12.500L9 17L5.500 13.500H1.500Z"/></svg>
  <div class="abs" style="left:1362px;top:0;width:1px;height:40px;background:#555"></div>
</div>
</body>
</html>
